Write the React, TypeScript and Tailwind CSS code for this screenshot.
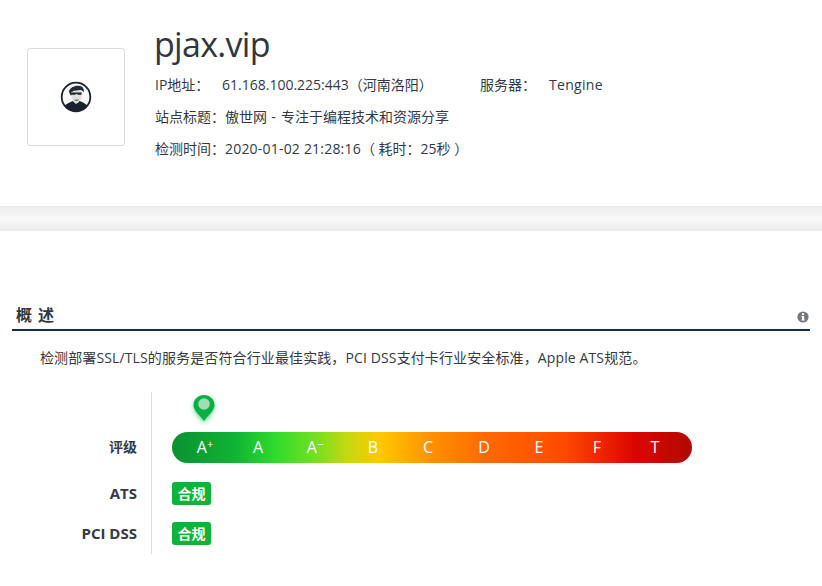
function Avatar() {
  return (
    <svg width="32" height="32" viewBox="0 0 32 32" className="block">
      <circle cx="16" cy="16" r="14.300" fill="#f7f7f7" stroke="#1c2230" strokeWidth="1.800" />
      <path d="M4.500 24.500c3-2.500 6.500-3.500 8.500-4.500l3 3 3.500-3c3 1 5 2 8 4.500-2.500 3.500-7 5.500-11.500 5.500S7 28 4.500 24.500z" fill="#1a2130" />
      <path d="M9 11c0-4 6-7 11-6 3 .5 4 3 4 6l-3-2-8 1-1 3-1 2z" fill="#252a36" />
      <path d="M11 11l9-1.500 2 1.500-.5 6-3.500 5h-3l-3-4z" fill="#dedede" />
      <path d="M11 11.500h10.500v2.300h-3.500l-1.500-1-1.500 1H11z" fill="#20242e" />
      <path d="M14 18.500h5l-1 1.500h-3z" fill="#777b84" />
    </svg>
  );
}

function Info() {
  return (
    <svg width="12" height="12" viewBox="0 0 12 12" className="block">
      <circle cx="6" cy="6" r="5.600" fill="#77787f" />
      <rect x="5" y="2.200" width="2.100" height="1.900" fill="#fff" />
      <path d="M4.300 5h2.800v3.400h.7v1.100H4.300V8.400H5V6.100h-.7z" fill="#fff" />
    </svg>
  );
}

function Pin() {
  return (
    <svg width="36" height="42" viewBox="0 0 36 42" className="block">
      <defs>
        <filter id="glow" x="-40%" y="-40%" width="180%" height="180%">
          <feGaussianBlur stdDeviation="2.400" />
        </filter>
      </defs>
      <path d="M18 6c5.500 0 10 4.300 10 9.700 0 6-6.200 11-10 16.300-3.800-5.300-10-10.300-10-16.300C8 10.300 12.500 6 18 6z" fill="#35c76a" opacity="0.800" filter="url(#glow)" />
      <path d="M18 4c5.800 0 10.500 4.400 10.500 10 0 6-6.700 10.500-10.500 16-3.800-5.500-10.500-10-10.500-16C7.500 8.400 12.200 4 18 4z" fill="#0aaf47" />
      <circle cx="18" cy="13" r="5.800" fill="#a2dcb2" />
    </svg>
  );
}

const grades: { g: string; s?: string; c: string }[] = [
  { g: "A", s: "+", c: "" },
  { g: "A", c: "-translate-x-[3px]" },
  { g: "A", s: "−", c: "-translate-x-[2px]" },
  { g: "B", c: "" },
  { g: "C", c: "-translate-x-[1px]" },
  { g: "D", c: "-translate-x-[1px]" },
  { g: "E", c: "-translate-x-[2px]" },
  { g: "F", c: "" },
  { g: "T", c: "translate-x-[2px]" },
];

export default function App() {
  return (
    <div className="w-[822px] h-[586px] overflow-hidden bg-white text-[#333a45] font-['Open_Sans','Noto_Sans_CJK_SC',sans-serif]">
      <div className="h-[206px] flex pl-[27px]">
        <div className="mt-[48px] w-[98px] h-[98px] border border-[#dcdcdc] rounded-[3px] flex items-center justify-center">
          <Avatar />
        </div>
        <div className="ml-[30px] pt-[21px]">
          <h1 className="-ml-[1px] text-[34px] tracking-[-0.7px] leading-[46px] text-[#2f3640]">pjax.vip</h1>
          <div className="mt-[2px] text-[14px] leading-[32px]">
            <div className="flex">
              <span className="w-[67px]">IP地址：</span>
              <span className="w-[258px]">61.168.100.225:443（河南洛阳）</span>
              <span className="w-[69px]">服务器：</span>
              <span className="tracking-[0.3px]">Tengine</span>
            </div>
            <div>站点标题：傲世网<span className="tracking-[0.7px]"> - </span>专注于编程技术和资源分享</div>
            <div>检测时间：<span className="tracking-[0.2px]">2020-01-02 21:28:16</span>（ 耗时：25秒 ）</div>
          </div>
        </div>
      </div>

      <div className="h-[25px] bg-gradient-to-b from-[#ececec] via-[#f8f8f8] to-[#ebebeb]" />

      <div className="mx-[12px] w-[798px] mt-[73px] h-[27px] border-b-2 border-[#172a56] flex justify-between pl-[4px] pr-[1px]">
        <span className="text-[16px] font-bold tracking-[6px] leading-[22px] text-[#33363d]">概述</span>
        <span className="pt-[7px]"><Info /></span>
      </div>

      <p className="ml-[40px] mt-[16px] text-[14px] leading-[22px] tracking-[0.12px]">
        检测部署SSL/TLS的服务是否符合行业最佳实践，PCI DSS支付卡行业安全标准，Apple ATS规范。
      </p>

      <div className="mt-[23px] flex text-[14px]">
        <div className="w-[137px] flex flex-col items-end font-bold text-[#333a45]">
          <div className="mt-[42px] h-[25px] leading-[25px]">评级</div>
          <div className="mt-[22px] h-[25px] leading-[25px] text-[15px]">ATS</div>
          <div className="mt-[15px] h-[25px] leading-[25px] text-[15px]">PCI DSS</div>
        </div>
        <div className="ml-[14px] h-[162px] border-l border-[#dddddd] pl-[20px] relative">
          <div className="absolute left-[34px] -top-[1px]">
            <Pin />
          </div>
          <div className="mt-[40px] w-[520px] h-[31px] rounded-full bg-[linear-gradient(90deg,#0a9130_0%,#10b335_12%,#2fdc2c_20%,#6ee020_27%,#c8d810_34%,#ffc800_40%,#ff9000_50%,#ff6a00_60%,#ff4b00_75%,#dc0500_89%,#b00a00_100%)]">
            <div className="grid grid-cols-[repeat(9,56px)] pl-[5px] text-white text-[16px] leading-[31px] text-center">
              {grades.map(({ g, s, c }, i) => (
                <span key={i} className={c}>
                  {g}
                  {s && <sup className="text-[11px] leading-none top-0 align-[5px]">{s}</sup>}
                </span>
              ))}
            </div>
          </div>
          <div className="mt-[19px] w-[39px] h-[23px] rounded-[3px] bg-[#0db33a] text-white font-bold text-[14px] leading-[23px] text-center">合规</div>
          <div className="mt-[17px] w-[39px] h-[23px] rounded-[3px] bg-[#0db33a] text-white font-bold text-[14px] leading-[23px] text-center">合规</div>
        </div>
      </div>
    </div>
  );
}
